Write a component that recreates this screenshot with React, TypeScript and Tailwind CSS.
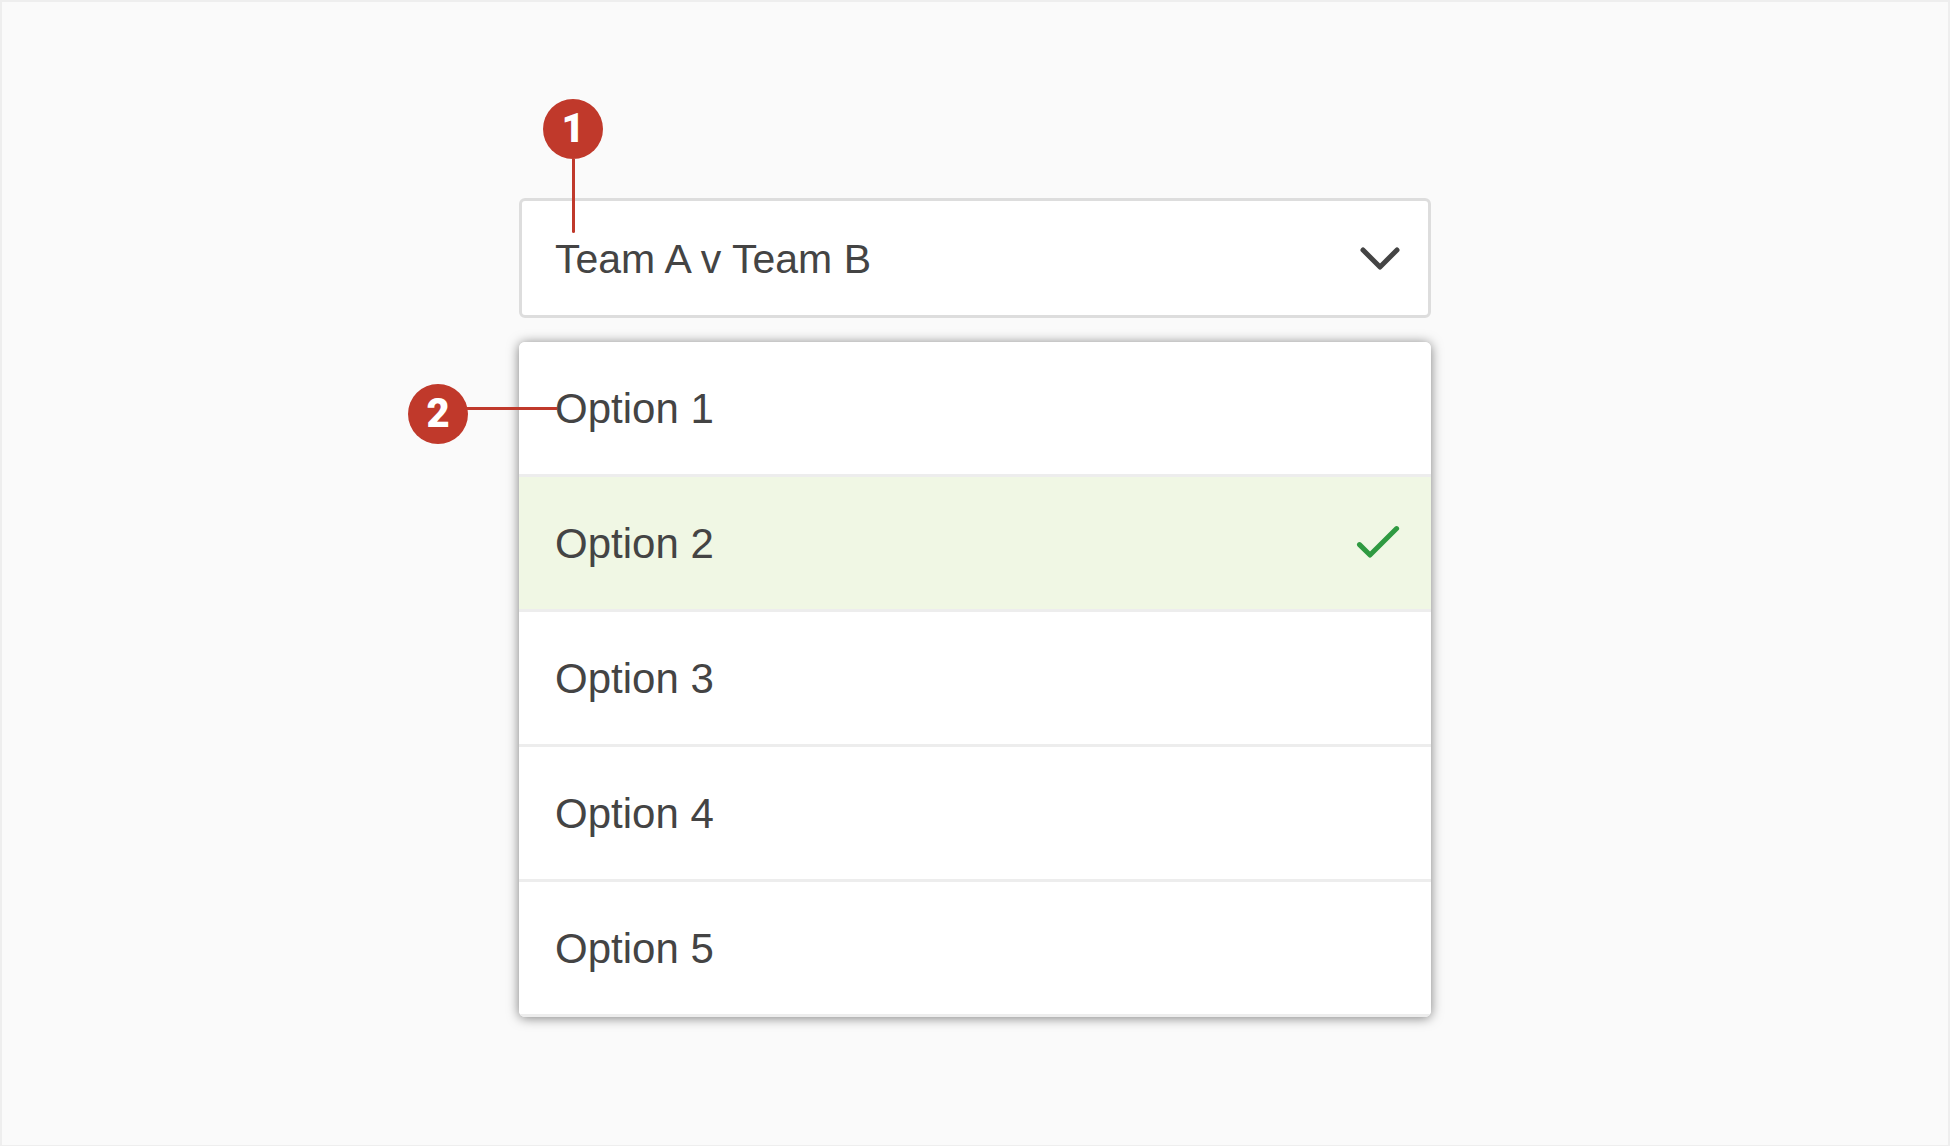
import { useState } from "react";

const options = ["Option 1", "Option 2", "Option 3", "Option 4", "Option 5"];

function ChevronIcon() {
  return (
    <svg
      className="pointer-events-none absolute inset-y-0 right-[27px] my-auto size-12 text-[#444444]"
      viewBox="0 0 48 48"
      fill="none"
      stroke="currentColor"
      strokeWidth="5"
      strokeLinecap="round"
      strokeLinejoin="round"
      aria-hidden="true"
    >
      <path d="M7 16 24 33 41 16" />
    </svg>
  );
}

function CheckIcon() {
  return (
    <svg
      className="size-12 shrink-0 text-[#2f9a41]"
      viewBox="0 0 48 48"
      fill="none"
      stroke="currentColor"
      strokeWidth="5"
      strokeLinecap="round"
      strokeLinejoin="round"
      aria-hidden="true"
    >
      <path d="M3.5 24.6 14 35 40.6 8.6" />
    </svg>
  );
}

function Badge({ label }: { label: string }) {
  return (
    <span className="flex size-15 shrink-0 items-center justify-center rounded-full bg-[#c0392b] font-['Roboto',sans-serif] text-[40px] leading-none font-black text-white">
      {label}
    </span>
  );
}

export default function App() {
  const [selected, setSelected] = useState("Option 2");

  return (
    <main className="min-h-screen border-2 border-[#eeeeee] bg-[#fafafa] px-36 pt-49 pb-32 font-['Liberation_Sans',Arial,sans-serif] text-[42px] leading-12 text-[#444444]">
      <div className="mx-auto flex w-full max-w-228 flex-col gap-6">
        <div className="relative">
          <select
            aria-label="Match"
            className="block h-30 w-full appearance-none rounded-md border-3 border-[#dddddd] bg-white pt-0.5 pr-24 pl-[33px] text-[41px] outline-none"
          >
            <option>Team A v Team B</option>
          </select>
          <ChevronIcon />
          <div className="pointer-events-none absolute -top-[99px] left-6 flex flex-col items-center">
            <Badge label="1" />
            <span className="h-[74px] w-[3px] rounded-b-full bg-[#c0392b]" />
          </div>
        </div>

        <div className="relative">
          <ul className="overflow-hidden rounded-md bg-white shadow-[0_1px_12px_rgba(0,0,0,0.5)]">
            {options.map((option) => (
              <li key={option} className="border-b-3 border-[#ededed]">
                <button
                  type="button"
                  aria-pressed={option === selected}
                  onClick={() => setSelected(option)}
                  className={
                    option === selected
                      ? "flex h-33 w-full items-center justify-between bg-[#f0f7e4] pt-0.5 pr-[27px] pl-9 text-left"
                      : "flex h-33 w-full items-center justify-between bg-white pt-0.5 pr-[27px] pl-9 text-left"
                  }
                >
                  {option}
                  {option === selected && <CheckIcon />}
                </button>
              </li>
            ))}
          </ul>
          <div className="pointer-events-none absolute top-[42px] -left-[111px] flex">
            <Badge label="2" />
            <span className="mt-[23px] -ml-px h-[3px] w-[90px] bg-[#c0392b]" />
          </div>
        </div>
      </div>
    </main>
  );
}
